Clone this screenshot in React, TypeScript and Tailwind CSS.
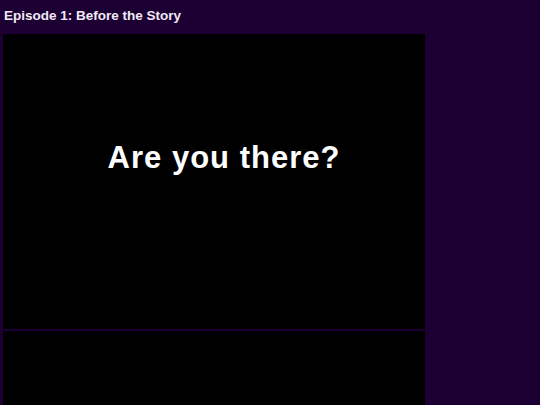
export default function App() {
  return (
    <div className="w-[540px] h-[405px] overflow-hidden bg-[#1d0033] font-['Liberation_Sans',Arial,sans-serif]">
      <div className="h-[34px] px-1 pt-[8px] text-[13.5px] font-bold leading-[16px] text-[#f0eaf6]">
        Episode 1: Before the Story
      </div>
      <div className="ml-[3px] w-[422px] bg-black">
        <div className="h-[295px] pt-[108px] pl-5 text-center">
          <p className="text-[31px] leading-[31px] font-bold text-white tracking-[1px]">Are you there?</p>
        </div>
        <div className="h-[2px] bg-[#1d0033]" />
        <div className="h-[100px]" />
      </div>
    </div>
  );
}
